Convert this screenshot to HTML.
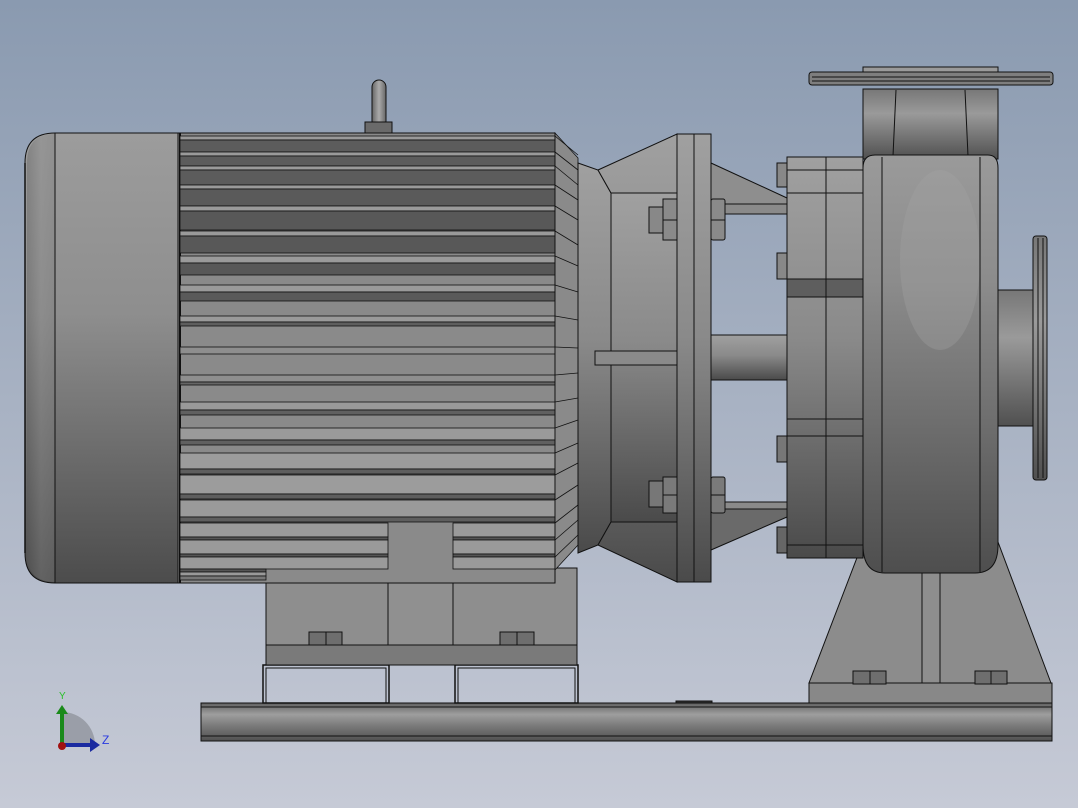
<!DOCTYPE html>
<html><head><meta charset="utf-8"><style>
html,body{margin:0;padding:0;width:1078px;height:808px;overflow:hidden}
svg{display:block}
text{font-family:"Liberation Sans",sans-serif}
</style></head><body>
<svg width="1078" height="808" viewBox="0 0 1078 808" xmlns="http://www.w3.org/2000/svg">
<defs>
<linearGradient id="bg" x1="0" y1="0" x2="0" y2="1"><stop offset="0" stop-color="#8a9ab0"/><stop offset="1" stop-color="#c6cad6"/></linearGradient>
<linearGradient id="cap" x1="0" y1="0" x2="0" y2="1"><stop offset="0" stop-color="#9c9c9c"/><stop offset="0.4" stop-color="#8e8e8e"/><stop offset="1" stop-color="#4c4c4c"/></linearGradient>
<linearGradient id="capL" x1="0" y1="0" x2="1" y2="0"><stop offset="0" stop-color="#555"/><stop offset="0.5" stop-color="#8a8a8a"/><stop offset="1" stop-color="#7a7a7a"/></linearGradient>
<linearGradient id="vert" x1="0" y1="0" x2="0" y2="1"><stop offset="0" stop-color="#a0a0a0"/><stop offset="0.45" stop-color="#8a8a8a"/><stop offset="1" stop-color="#4a4a4a"/></linearGradient>
<linearGradient id="volute" x1="0" y1="0" x2="0" y2="1"><stop offset="0" stop-color="#9a9a9a"/><stop offset="0.3" stop-color="#8c8c8c"/><stop offset="1" stop-color="#4e4e4e"/></linearGradient>
<linearGradient id="rail" x1="0" y1="0" x2="0" y2="1"><stop offset="0" stop-color="#606060"/><stop offset="0.3" stop-color="#9e9e9e"/><stop offset="0.6" stop-color="#7a7a7a"/><stop offset="1" stop-color="#505050"/></linearGradient>
<linearGradient id="pipe" x1="0" y1="0" x2="0" y2="1"><stop offset="0" stop-color="#777"/><stop offset="0.35" stop-color="#9a9a9a"/><stop offset="1" stop-color="#505050"/></linearGradient>
<linearGradient id="eye" x1="0" y1="0" x2="1" y2="0"><stop offset="0" stop-color="#666"/><stop offset="0.5" stop-color="#aaa"/><stop offset="1" stop-color="#666"/></linearGradient>
</defs>
<rect width="1078" height="808" fill="url(#bg)"/>

<g stroke="#111" stroke-width="1">
<!-- rail -->
<rect x="201" y="703" width="851" height="38" fill="url(#rail)"/>
<line x1="201" y1="707" x2="1052" y2="707"/>
<line x1="201" y1="736" x2="1052" y2="736"/>
<rect x="676" y="701" width="36" height="2" fill="#333"/>

<!-- motor legs -->
<rect x="263" y="665" width="126" height="38" fill="none" stroke-width="1.5"/>
<rect x="266" y="668" width="120" height="35" fill="none"/>
<rect x="455" y="665" width="123" height="38" fill="none" stroke-width="1.5"/>
<rect x="458" y="668" width="117" height="35" fill="none"/>
<!-- motor feet -->
<rect x="266" y="568" width="311" height="97" fill="#8e8e8e"/>
<rect x="266" y="645" width="311" height="20" fill="#7a7a7a"/>
<rect x="388" y="522" width="65" height="123" fill="#909090"/>
<rect x="309" y="632" width="17" height="13" fill="#6e6e6e"/><rect x="326" y="632" width="16" height="13" fill="#6e6e6e"/>
<rect x="500" y="632" width="17" height="13" fill="#6e6e6e"/><rect x="517" y="632" width="17" height="13" fill="#6e6e6e"/>

<!-- eye bolt -->
<rect x="372" y="80" width="14" height="48" rx="7" fill="url(#eye)"/>
<rect x="365" y="122" width="27" height="11" fill="#6a6a6a"/>

<!-- end cap -->
<path d="M55,133 H178 V583 H55 Q25,583 25,553 V163 Q25,133 55,133 Z" fill="url(#cap)"/>
<path d="M55,134 Q27,134 27,163 V553 Q27,582 55,582" fill="url(#capL)" stroke="none" opacity="0.35"/>
<line x1="55" y1="133" x2="55" y2="583"/>
<line x1="25" y1="163" x2="25" y2="553" stroke-width="1.5"/>

<!-- motor body -->
<rect x="178" y="133" width="377" height="450" fill="#8a8a8a"/>
<line x1="180" y1="133" x2="180" y2="583" stroke-width="2"/>
</g>

<g stroke="#111" stroke-width="0.8">
<!-- upper fins: light strip then dark -->
<rect x="180" y="136" width="375" height="4" fill="#9a9a9a"/><rect x="180" y="140" width="375" height="12" fill="#5c5c5c"/>
<rect x="180" y="152" width="375" height="4" fill="#9a9a9a"/><rect x="180" y="156" width="375" height="10" fill="#5c5c5c"/>
<rect x="180" y="166" width="375" height="4" fill="#9a9a9a"/><rect x="180" y="170" width="375" height="15" fill="#5c5c5c"/>
<rect x="180" y="185" width="375" height="4" fill="#9a9a9a"/><rect x="180" y="189" width="375" height="17" fill="#5a5a5a"/>
<rect x="180" y="206" width="375" height="5" fill="#9a9a9a"/><rect x="180" y="211" width="375" height="19" fill="#585858"/>
<rect x="180" y="231" width="375" height="5" fill="#9a9a9a"/><rect x="180" y="236" width="375" height="17" fill="#585858"/>
<rect x="180" y="256" width="375" height="7" fill="#9a9a9a"/><rect x="180" y="263" width="375" height="12" fill="#585858"/>
<rect x="180" y="285" width="375" height="7" fill="#9a9a9a"/><rect x="180" y="292" width="375" height="9" fill="#5a5a5a"/>
<rect x="180" y="316" width="375" height="6" fill="#9a9a9a"/><rect x="180" y="322" width="375" height="4" fill="#5e5e5e"/>
<rect x="180" y="347" width="375" height="7" fill="#8e8e8e"/>
<rect x="180" y="375" width="375" height="7" fill="#8e8e8e"/><rect x="180" y="382" width="375" height="3" fill="#666"/>
<rect x="180" y="402" width="375" height="8" fill="#999"/><rect x="180" y="410" width="375" height="5" fill="#606060"/>
<rect x="180" y="428" width="375" height="12" fill="#9a9a9a"/><rect x="180" y="440" width="375" height="5" fill="#606060"/>
<rect x="180" y="453" width="375" height="16" fill="#9c9c9c"/><rect x="180" y="469" width="375" height="5" fill="#5e5e5e"/>
<rect x="180" y="475" width="375" height="19" fill="#9c9c9c"/><rect x="180" y="494" width="375" height="5" fill="#5e5e5e"/>
<rect x="180" y="500" width="375" height="17" fill="#9a9a9a"/><rect x="180" y="517" width="375" height="5" fill="#5e5e5e"/>
<rect x="180" y="523" width="208" height="14" fill="#9a9a9a"/><rect x="453" y="523" width="102" height="14" fill="#9a9a9a"/>
<rect x="180" y="537" width="208" height="3" fill="#555"/><rect x="453" y="537" width="102" height="3" fill="#555"/>
<rect x="180" y="540" width="208" height="14" fill="#9a9a9a"/><rect x="453" y="540" width="102" height="14" fill="#9a9a9a"/>
<rect x="180" y="554" width="208" height="3" fill="#555"/><rect x="453" y="554" width="102" height="3" fill="#555"/>
<rect x="180" y="557" width="208" height="12" fill="#9a9a9a"/><rect x="453" y="557" width="102" height="12" fill="#9a9a9a"/>
<rect x="180" y="569" width="86" height="3" fill="#555"/><rect x="180" y="572" width="86" height="4" fill="#999"/><rect x="180" y="576" width="86" height="4" fill="#777"/>
</g>
<!-- fin chamfers -->
<g stroke="#111" stroke-width="0.8" fill="#8a8a8a">
<path d="M555,133 L578,158 V545 L555,570 Z" fill="#8a8a8a"/>
<path d="M555,136 L578,155 M555,152 L578,170 M555,166 L578,185 M555,185 L578,200 M555,206 L578,220 M555,231 L578,245 M555,256 L578,266 M555,285 L578,292 M555,316 L578,320 M555,347 L578,348 M555,375 L578,373 M555,402 L578,398 M555,428 L578,420 M555,453 L578,443 M555,475 L578,463 M555,500 L578,485 M555,523 L578,505 M555,540 L578,520 M555,557 L578,535" fill="none"/>
<line x1="555" y1="133" x2="555" y2="583"/>
</g>

<g stroke="#111" stroke-width="1">
<!-- adapter cone -->
<path d="M578,163 L598,170 L611,193 V522 L598,545 L578,553 Z" fill="url(#vert)"/>
<path d="M598,170 L677,134 V582 L598,545 L611,522 V193 Z" fill="url(#vert)"/>
<rect x="611" y="193" width="66" height="329" fill="url(#vert)"/>
<rect x="595" y="351" width="192" height="14" fill="#8a8a8a"/>
<!-- flange -->
<rect x="677" y="134" width="34" height="448" fill="url(#vert)"/>
<line x1="694" y1="134" x2="694" y2="582"/>
<!-- ribs to bearing -->
<path d="M711,163 L787,198 V210 L711,210 Z" fill="#8e8e8e"/>
<path d="M711,550 L787,517 V505 L711,505 Z" fill="#6a6a6a"/>
<rect x="711" y="204" width="76" height="10" fill="#8a8a8a"/>
<rect x="711" y="335" width="76" height="45" fill="url(#vert)"/>
<rect x="711" y="502" width="76" height="7" fill="#8a8a8a"/>
<!-- nuts -->
<rect x="649" y="207" width="14" height="26" fill="#888"/>
<rect x="663" y="199" width="14" height="41" fill="#8a8a8a"/>
<rect x="711" y="199" width="14" height="41" fill="#8a8a8a" rx="2"/>
<line x1="663" y1="220" x2="677" y2="220"/><line x1="711" y1="220" x2="725" y2="220"/>
<rect x="649" y="481" width="14" height="26" fill="#777"/>
<rect x="663" y="477" width="14" height="36" fill="#7a7a7a"/>
<rect x="711" y="477" width="14" height="36" fill="#7a7a7a" rx="2"/>
<line x1="663" y1="495" x2="677" y2="495"/><line x1="711" y1="495" x2="725" y2="495"/>

<!-- discharge -->
<rect x="863" y="89" width="135" height="70" fill="url(#pipe)"/>
<line x1="896" y1="90" x2="893" y2="156"/><line x1="965" y1="90" x2="968" y2="156"/>
<rect x="863" y="67" width="135" height="6" fill="#9a9a9a"/>
<rect x="809" y="72" width="244" height="13" rx="3" fill="#7e7e7e"/>
<line x1="812" y1="77" x2="1050" y2="77"/><line x1="812" y1="81" x2="1050" y2="81"/>

<!-- pedestal -->
<path d="M863,542 L998,542 L1051,683 L809,683 Z" fill="#8c8c8c"/>
<rect x="809" y="683" width="243" height="20" fill="#888"/>
<rect x="922" y="553" width="18" height="130" fill="#8e8e8e"/>
<rect x="853" y="671" width="17" height="13" fill="#6e6e6e"/><rect x="870" y="671" width="16" height="13" fill="#6e6e6e"/>
<rect x="975" y="671" width="16" height="13" fill="#6e6e6e"/><rect x="991" y="671" width="16" height="13" fill="#6e6e6e"/>

<!-- suction -->
<rect x="996" y="290" width="37" height="136" fill="url(#pipe)"/>
<rect x="1033" y="236" width="14" height="244" rx="3" fill="url(#pipe)"/>
<line x1="1038" y1="238" x2="1038" y2="478"/><line x1="1043" y1="238" x2="1043" y2="478"/>

<!-- bearing housing -->
<rect x="787" y="157" width="76" height="401" fill="url(#vert)"/>
<rect x="787" y="279" width="76" height="18" fill="#5e5e5e"/>
<line x1="787" y1="170" x2="863" y2="170"/><line x1="787" y1="193" x2="863" y2="193"/>
<line x1="787" y1="419" x2="863" y2="419"/><line x1="787" y1="436" x2="863" y2="436"/>
<line x1="787" y1="545" x2="863" y2="545"/>
<line x1="826" y1="157" x2="826" y2="558"/>
<rect x="777" y="163" width="10" height="24" fill="#888"/>
<rect x="777" y="253" width="10" height="26" fill="#888"/>
<rect x="777" y="436" width="10" height="26" fill="#777"/>
<rect x="777" y="527" width="10" height="26" fill="#666"/>

<!-- volute -->
<path d="M875,155 H988 Q998,155 998,168 V545 Q998,573 975,573 H885 Q863,573 863,545 V168 Q863,155 875,155 Z" fill="url(#volute)"/>
<ellipse cx="940" cy="260" rx="40" ry="90" fill="#a4a4a4" opacity="0.35" stroke="none"/>
<line x1="882" y1="157" x2="882" y2="572"/><line x1="980" y1="157" x2="980" y2="572"/>
</g>

<!-- axis triad -->
<path d="M62,745 L62,712 A33,33 0 0 1 95,745 Z" fill="#9a9ea8"/>
<rect x="60" y="712" width="4" height="33" fill="#1a8a1a"/>
<path d="M56,714 L62,705 L68,714 Z" fill="#1a8a1a"/>
<rect x="62" y="743" width="30" height="4" fill="#1a2aa0"/>
<path d="M90,738 L100,745 L90,752 Z" fill="#1a2aa0"/>
<circle cx="62" cy="746" r="4" fill="#a01010"/>
<text x="59" y="699" font-size="10" fill="#2ac02a">Y</text>
<text x="102" y="744" font-size="12" fill="#2a3ae0">Z</text>
</svg>
</body></html>
